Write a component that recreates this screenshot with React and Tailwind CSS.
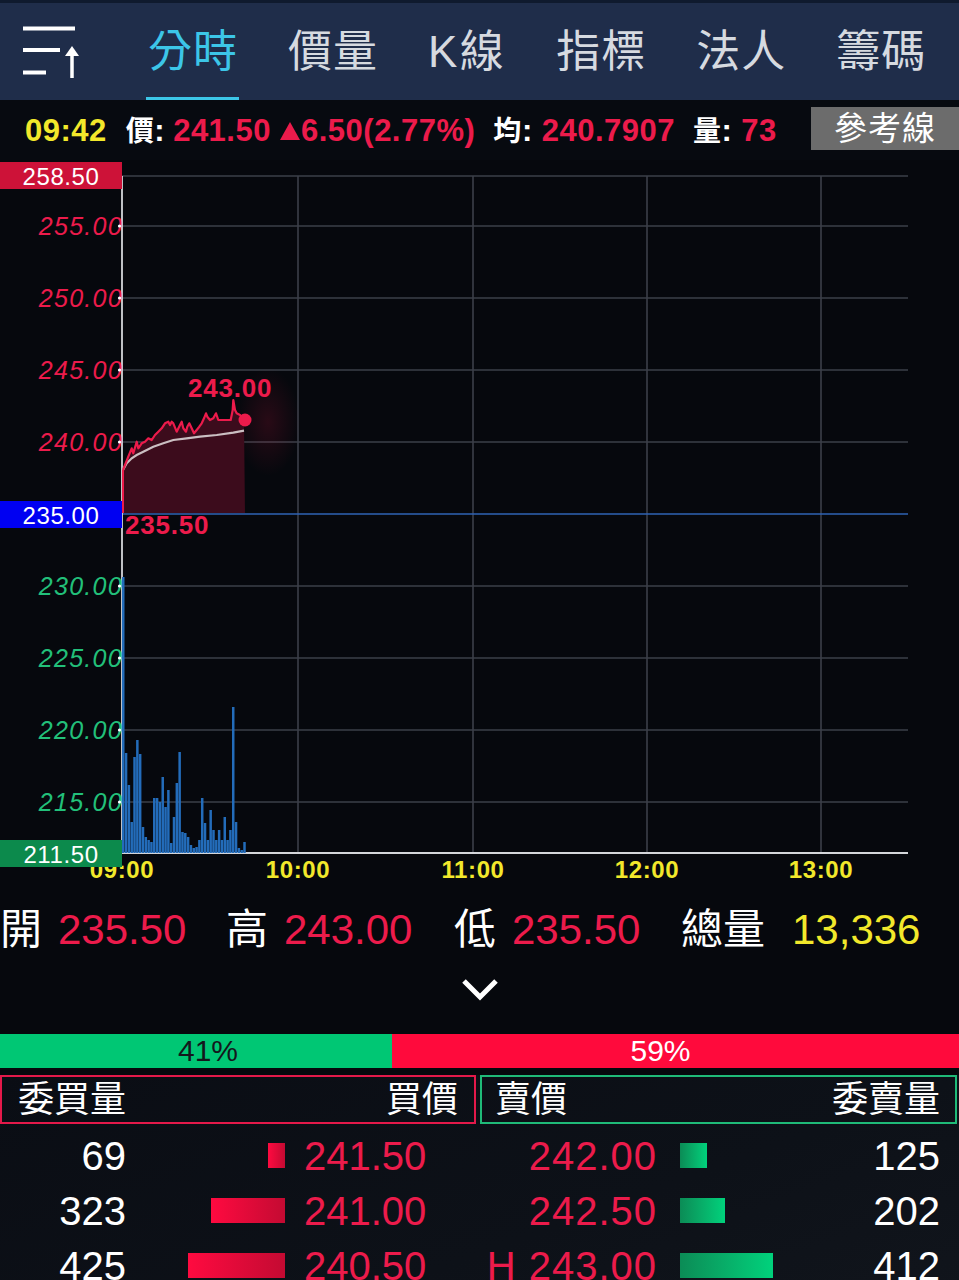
import React from "react";

const FONT = "'Liberation Sans', 'Noto Sans CJK TC', sans-serif";
const RED = "#ec1b4b";
const GREEN = "#22c07a";
const YELLOW = "#f2e82b";

const TABS = ["分時", "價量", "K線", "指標", "法人", "籌碼"];

// intraday price path (page coordinates)
const PRICE = [
  [123, 470], [128.3, 456.7], [131.7, 448.3], [133.3, 453.3], [136.7, 441.7], [138.3, 448.3],
  [141.7, 443.3], [145, 441.7], [148.3, 438.3], [151.7, 440], [155, 435], [158.3, 431.7],
  [161.7, 428.3], [165, 423.3], [168.3, 421.7], [170, 425], [171.7, 421.7], [173.3, 423.3],
  [176.7, 431.7], [180, 425], [181.7, 421.7], [183.3, 428.3], [186, 431.7], [187.3, 426.7],
  [189.3, 423.3], [191.7, 428.3], [194, 433.3], [196.7, 430], [199.3, 426.7], [201.7, 423.3],
  [204, 418.3], [206, 413.3], [207.3, 416.7], [210, 420], [213.3, 418.3], [216, 413.3],
  [218.3, 420], [230.7, 420], [232.7, 410], [233.3, 400], [235, 410], [236.7, 413.3],
  [240, 415], [244, 420.7],
];

const AVG = [
  [123, 470], [126.7, 463.3], [131.7, 458.3], [136.7, 455], [143.3, 451.7], [153.3, 446.7],
  [163.3, 443.3], [173.3, 440], [186.7, 438.3], [200, 436.7], [216.7, 435], [233.3, 432.7],
  [244, 430.7],
];

// volume bar tops (page y), bars sit on y = 853
const VOL = [
  577, 753, 785, 822, 757, 740, 754, 827, 837, 840, 842, 798, 798, 802, 777, 807, 790, 843,
  817, 783, 752, 832, 833, 837, 845, 848, 847, 840, 798, 823, 840, 810, 830, 840, 830, 840,
  817, 840, 830, 707, 822, 848, 850, 842,
];

const pts = (a) => a.map(([x, y]) => `${x},${y}`).join(" ");

function MenuIcon() {
  return (
    <svg width="100" height="100" viewBox="0 0 100 100" className="shrink-0">
      <g stroke="#ffffff" strokeWidth="4" strokeLinecap="butt">
        <line x1="23" y1="28.5" x2="75" y2="28.5" />
        <line x1="23" y1="50" x2="60" y2="50" />
        <line x1="23" y1="72.5" x2="46" y2="72.5" />
        <line x1="72" y1="54" x2="72" y2="78" strokeWidth="3.5" />
      </g>
      <polygon points="65,56 72,46 79,56" fill="#ffffff" />
    </svg>
  );
}

function UpTriangle() {
  return (
    <svg width="22" height="20" viewBox="0 0 22 20" className="ml-[8px] mt-[2px] shrink-0">
      <polygon points="11,1 21,19 1,19" fill={RED} />
    </svg>
  );
}

function Chart() {
  const hLines = [176, 226, 298, 370, 442, 586, 658, 730, 802];
  const vLines = [298, 473, 647, 821];
  const redLabels = [
    ["255.00", 226],
    ["250.00", 298],
    ["245.00", 370],
    ["240.00", 442],
  ];
  const greenLabels = [
    ["230.00", 586],
    ["225.00", 658],
    ["220.00", 730],
    ["215.00", 802],
  ];
  const times = [
    ["09:00", 122],
    ["10:00", 298],
    ["11:00", 473],
    ["12:00", 647],
    ["13:00", 821],
  ];
  const fill = `${pts(PRICE)} 245,513 123,513`;
  return (
    <svg
      width="959"
      height="730"
      viewBox="0 160 959 730"
      className="block"
      style={{ fontFamily: FONT }}
    >
      <defs>
        <radialGradient id="halo" cx="0.5" cy="0.5" r="0.5">
          <stop offset="0" stopColor="#ff1a4e" stopOpacity="0.14" />
          <stop offset="1" stopColor="#ff1a4e" stopOpacity="0" />
        </radialGradient>
      </defs>

      {/* grid */}
      {hLines.map((y) => (
        <line key={y} x1="122" y1={y} x2="908" y2={y} stroke="#3b3f49" strokeWidth="1.6" />
      ))}
      {vLines.map((x) => (
        <line key={x} x1={x} y1="176" x2={x} y2="853" stroke="#3b3f49" strokeWidth="1.6" />
      ))}
      <line x1="122" y1="514" x2="908" y2="514" stroke="#2f63b4" strokeWidth="1.6" />
      <line x1="122" y1="853" x2="908" y2="853" stroke="#d4d6da" strokeWidth="1.8" />
      <line x1="122" y1="176" x2="122" y2="853" stroke="#d4d6da" strokeWidth="1.8" />

      {/* price area */}
      <rect x="236" y="368" width="64" height="108" fill="url(#halo)" />
      <polygon points={fill} fill="#3c0c1c" />
      <polyline points={pts(AVG)} fill="none" stroke="#cbbfc2" strokeWidth="2.2" />
      <line x1="123" y1="513" x2="123" y2="470" stroke={RED} strokeWidth="2" />
      <polyline points={pts(PRICE)} fill="none" stroke={RED} strokeWidth="2.2" strokeLinejoin="round" />
      <circle cx="245" cy="420" r="6.5" fill={RED} />

      {/* volume */}
      {VOL.map((top, i) => (
        <rect
          key={i}
          x={122 + i * 2.82}
          y={top}
          width="2.5"
          height={853 - top}
          fill="#236cba"
        />
      ))}

      {/* axis labels */}
      {redLabels.map(([t, y]) => (
        <text
          key={t}
          x="123"
          y={y}
          textAnchor="end"
          dominantBaseline="central"
          fontSize="25"
          fontStyle="italic"
          letterSpacing="1.3"
          fill={RED}
        >
          {t}
        </text>
      ))}
      {greenLabels.map(([t, y]) => (
        <text
          key={t}
          x="123"
          y={y}
          textAnchor="end"
          dominantBaseline="central"
          fontSize="25"
          fontStyle="italic"
          letterSpacing="1.3"
          fill={GREEN}
        >
          {t}
        </text>
      ))}
      {[...hLines.slice(1), 514].map((y) => (
        <circle key={y} cx="119.5" cy={y} r="1.6" fill="#ffffff" />
      ))}

      <text x="188" y="388" dominantBaseline="central" fontSize="26" fontWeight="bold" letterSpacing="0.8" fill={RED}>
        243.00
      </text>
      <text x="125" y="525" dominantBaseline="central" fontSize="26" fontWeight="bold" letterSpacing="0.8" fill={RED}>
        235.50
      </text>

      {/* time axis */}
      {times.map(([t, x]) => (
        <text
          key={t}
          x={x}
          y="869"
          textAnchor="middle"
          dominantBaseline="central"
          fontSize="24"
          fontWeight="bold"
          letterSpacing="0.6"
          fill={YELLOW}
        >
          {t}
        </text>
      ))}

      {/* boxed limits */}
      <rect x="0" y="162" width="122" height="27" fill="#cd1238" />
      <text x="61" y="176" textAnchor="middle" dominantBaseline="central" fontSize="24" letterSpacing="0.6" fill="#ffffff">
        258.50
      </text>
      <rect x="0" y="501" width="122" height="27" fill="#0000f2" />
      <text x="61" y="515" textAnchor="middle" dominantBaseline="central" fontSize="24" letterSpacing="0.6" fill="#ffffff">
        235.00
      </text>
      <rect x="0" y="840" width="122" height="27" fill="#0c8a4c" />
      <text x="61" y="854" textAnchor="middle" dominantBaseline="central" fontSize="24" letterSpacing="0.6" fill="#ffffff">
        211.50
      </text>
    </svg>
  );
}

const BIDS = [
  ["69", "241.50", 17],
  ["323", "241.00", 74],
  ["425", "240.50", 97],
];
const ASKS = [
  ["", "242.00", 27, "125"],
  ["", "242.50", 45, "202"],
  ["H", "243.00", 93, "412"],
];

export default function App() {
  return (
    <div
      className="w-[959px] h-[1280px] overflow-hidden bg-[#06080d] text-white"
      style={{ fontFamily: FONT }}
    >
      {/* tab header */}
      <div className="h-[100px] flex items-stretch bg-[linear-gradient(to_bottom,#0f1a2e_0,#0f1a2e_3px,#1f2d4a_3px)]">
        <MenuIcon />
        <div className="ml-[48px] flex items-stretch gap-[50px]">
          {TABS.map((t, i) => (
            <div key={t} className="relative flex items-center pt-[3px]">
              <span
                className={`text-[44px] leading-none ${
                  i === 2 ? "tracking-[2.5px]" : "tracking-[1px]"
                } ${i === 0 ? "text-[#3cc6e8]" : "text-[#d6dae0]"}`}
              >
                {t}
              </span>
              {i === 0 && (
                <div className="absolute bottom-0 left-[-2px] right-[-1px] h-[3px] bg-[#3cc6e8]" />
              )}
            </div>
          ))}
        </div>
      </div>

      {/* quote line */}
      <div className="h-[60px] flex items-center bg-[#070a10] font-bold text-[31px] tracking-[0.5px] leading-none">
        <span className="ml-[25px] text-[#f2e82b]">09:42</span>
        <span className="ml-[19px] text-white">
          <span className="text-[28px]">價</span>:
        </span>
        <span className="ml-[8px] text-[#ec1b4b]">241.50</span>
        <UpTriangle />
        <span className="text-[#ec1b4b]">6.50(2.77%)</span>
        <span className="ml-[18px] text-white">
          <span className="text-[28px]">均</span>:
        </span>
        <span className="ml-[9px] text-[#ec1b4b]">240.7907</span>
        <span className="ml-[18px] text-white">
          <span className="text-[28px]">量</span>:
        </span>
        <span className="ml-[9px] text-[#ec1b4b]">73</span>
        <div className="ml-auto self-start mt-[7px] h-[43px] w-[148px] bg-[#6c6c6c] flex items-center justify-center">
          <span className="text-[33px] font-normal text-white tracking-[1px]">參考線</span>
        </div>
      </div>

      <Chart />

      {/* open / high / low / volume */}
      <div className="h-[80px] flex items-center text-[42px] leading-none">
        <div className="w-[226px] flex items-center">
          <span className="text-white">開</span>
          <span className="ml-[16px] text-[#ec1b4b]">235.50</span>
        </div>
        <div className="w-[228px] flex items-center">
          <span className="text-white">高</span>
          <span className="ml-[16px] text-[#ec1b4b]">243.00</span>
        </div>
        <div className="w-[227px] flex items-center">
          <span className="text-white">低</span>
          <span className="ml-[16px] text-[#ec1b4b]">235.50</span>
        </div>
        <div className="flex items-center">
          <span className="text-white">總量</span>
          <span className="ml-[27px] text-[#f2e82b]">13,336</span>
        </div>
      </div>
      <div className="h-[64px] flex justify-center">
        <svg width="40" height="28" viewBox="0 0 40 28" className="mt-[5px]">
          <polyline points="4,6 20,22 36,6" fill="none" stroke="#ffffff" strokeWidth="5" />
        </svg>
      </div>

      {/* bid / ask ratio */}
      <div className="h-[34px] flex text-[30px] leading-none">
        <div className="w-[392px] bg-[#00c774] flex items-center justify-center pl-[24px] text-[#14181c]">
          41%
        </div>
        <div className="flex-1 bg-[#ff0a3c] flex items-center justify-center pr-[30px] text-white">
          59%
        </div>
      </div>

      {/* order book */}
      <div className="mt-[7px] bg-[linear-gradient(160deg,#0a0d14_0%,#0d1118_60%,#11151c_100%)] h-[240px]">
        <div className="flex gap-[4px] h-[49px] text-[36px] leading-none">
          <div className="w-[476px] border-2 border-[#e4194a] flex items-center justify-between pl-[16px] pr-[16px]">
            <span>委買量</span>
            <span>買價</span>
          </div>
          <div className="w-[477px] border-2 border-[#1fba78] flex items-center justify-between pl-[13px] pr-[15px]">
            <span>賣價</span>
            <span>委賣量</span>
          </div>
        </div>
        <div className="mt-[4px]">
          {BIDS.map((b, i) => {
            const a = ASKS[i];
            return (
              <div key={i} className="h-[55px] flex items-center text-[40px] leading-none">
                <div className="w-[480px] flex items-center">
                  <span className="w-[126px] text-right text-white">{b[0]}</span>
                  <div className="w-[159px] flex justify-end">
                    <div
                      className="h-[25px] bg-linear-to-r from-[#ff0a40] to-[#c40a32]"
                      style={{ width: b[2] }}
                    />
                  </div>
                  <span className="ml-[19px] text-[#ec1b4b]">{b[1]}</span>
                </div>
                <div className="flex-1 flex items-center">
                  <span className="w-[177px] text-right text-[#ec1b4b] whitespace-pre tracking-[1px]">
                    {a[0] ? `${a[0]} ${a[1]}` : a[1]}
                  </span>
                  <div className="ml-[23px] w-[120px] flex">
                    <div
                      className="h-[25px] bg-linear-to-r from-[#0b8c56] to-[#00d27c]"
                      style={{ width: a[2] }}
                    />
                  </div>
                  <span className="flex-1 text-right pr-[19px] text-white">{a[3]}</span>
                </div>
              </div>
            );
          })}
        </div>
      </div>
    </div>
  );
}
